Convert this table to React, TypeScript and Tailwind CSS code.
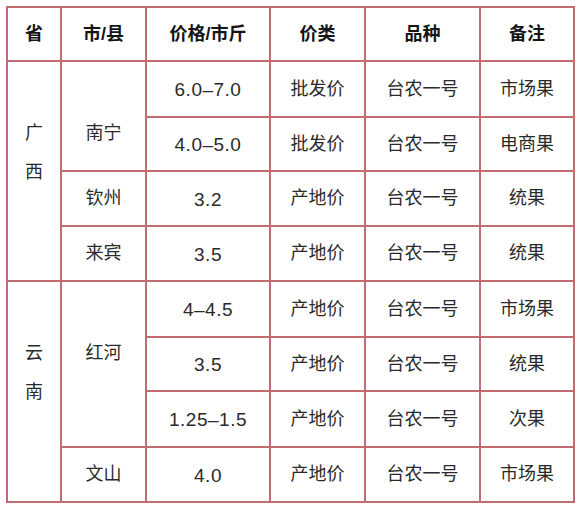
import React from "react";

const B = "border-2 border-[#c36b73]";
const cell = `${B} text-center align-middle p-0`;

type Row = { price: string; kind: string; variety: string; note: string };

const rowsH = [56, 54, 55, 55, 56, 54, 56, 55];

export default function App() {
  const data: Row[] = [
    { price: "6.0–7.0", kind: "批发价", variety: "台农一号", note: "市场果" },
    { price: "4.0–5.0", kind: "批发价", variety: "台农一号", note: "电商果" },
    { price: "3.2", kind: "产地价", variety: "台农一号", note: "统果" },
    { price: "3.5", kind: "产地价", variety: "台农一号", note: "统果" },
    { price: "4–4.5", kind: "产地价", variety: "台农一号", note: "市场果" },
    { price: "3.5", kind: "产地价", variety: "台农一号", note: "统果" },
    { price: "1.25–1.5", kind: "产地价", variety: "台农一号", note: "次果" },
    { price: "4.0", kind: "产地价", variety: "台农一号", note: "市场果" },
  ];

  const rest = (r: Row) => (
    <>
      <td className={`${cell} text-[19px] tracking-[0.5px] pt-[3px]`}>{r.price}</td>
      <td className={cell}>{r.kind}</td>
      <td className={cell}>{r.variety}</td>
      <td className={cell}>{r.note}</td>
    </>
  );

  return (
    <div
      className="w-[587px] h-[511px] bg-white overflow-hidden pt-[6px] pl-[6px]"
      style={{ fontFamily: '"Liberation Sans", "Noto Sans CJK SC", sans-serif' }}
    >
      <table className="border-collapse table-fixed w-[567px] text-[18px] text-[#2a2a2a]">
        <colgroup>
          <col className="w-[54px]" />
          <col className="w-[85px]" />
          <col className="w-[124px]" />
          <col className="w-[95px]" />
          <col className="w-[115px]" />
          <col className="w-[94px]" />
        </colgroup>
        <thead>
          <tr className="h-[54px] font-bold text-[#151515]">
            <th className={cell}>省</th>
            <th className={cell}>市/县</th>
            <th className={cell}>价格/市斤</th>
            <th className={cell}>价类</th>
            <th className={cell}>品种</th>
            <th className={cell}>备注</th>
          </tr>
        </thead>
        <tbody>
          <tr style={{ height: rowsH[0] }}>
            <td rowSpan={4} className={`${B} text-center align-top p-0 pt-[52px] leading-[39px]`}>
              广<br />西
            </td>
            <td rowSpan={2} className={`${B} text-center align-top p-0 pt-[52px] leading-[39px]`}>
              南宁
            </td>
            {rest(data[0])}
          </tr>
          <tr style={{ height: rowsH[1] }}>{rest(data[1])}</tr>
          <tr style={{ height: rowsH[2] }}>
            <td className={cell}>钦州</td>
            {rest(data[2])}
          </tr>
          <tr style={{ height: rowsH[3] }}>
            <td className={cell}>来宾</td>
            {rest(data[3])}
          </tr>
          <tr style={{ height: rowsH[4] }}>
            <td rowSpan={4} className={`${B} text-center align-top p-0 pt-[52px] leading-[39px]`}>
              云<br />南
            </td>
            <td rowSpan={3} className={`${B} text-center align-top p-0 pt-[52px] leading-[39px]`}>
              红河
            </td>
            {rest(data[4])}
          </tr>
          <tr style={{ height: rowsH[5] }}>{rest(data[5])}</tr>
          <tr style={{ height: rowsH[6] }}>{rest(data[6])}</tr>
          <tr style={{ height: rowsH[7] }}>
            <td className={cell}>文山</td>
            {rest(data[7])}
          </tr>
        </tbody>
      </table>
    </div>
  );
}
